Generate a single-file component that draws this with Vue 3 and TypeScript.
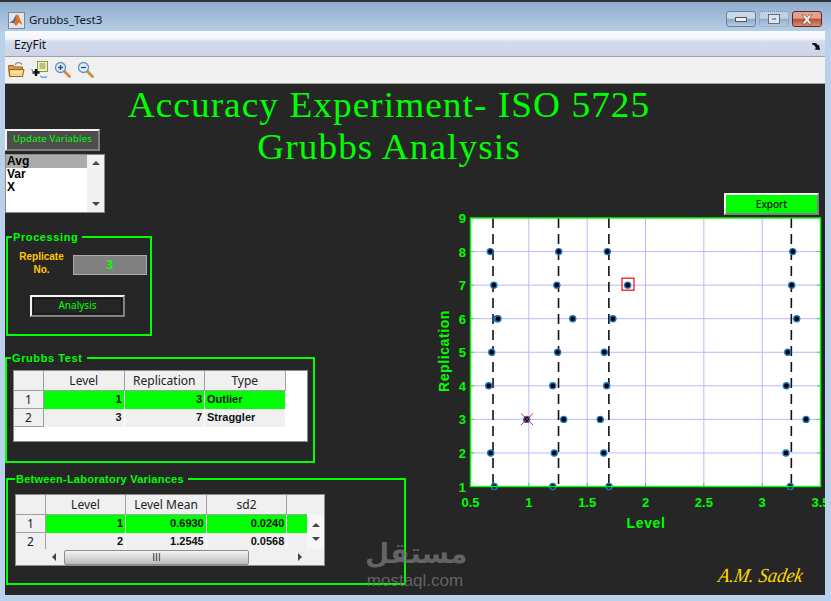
<script setup lang="ts">
type Row = { head: string; cells: string[] }

const vars = ["Avg", "Var", "X"]

const grubbsCols = ["Level", "Replication", "Type"]
const grubbsRows: Row[] = [
  { head: "1", cells: ["1", "3", "Outlier"] },
  { head: "2", cells: ["3", "7", "Straggler"] },
]

const labCols = ["Level", "Level Mean", "sd2", ""]
const labRows: Row[] = [
  { head: "1", cells: ["1", "0.6930", "0.0240", ""] },
  { head: "2", cells: ["2", "1.2545", "0.0568", ""] },
]

// replicate values per row, top row first
const data: [number, number[]][] = [
  [8, [0.67, 1.256, 1.673, 3.262]],
  [7, [0.7, 1.24, 1.847, 3.253]],
  [6, [0.727, 0.736, 1.376, 1.721, 3.296]],
  [5, [0.682, 1.247, 1.647, 3.219]],
  [4, [0.656, 1.205, 1.667, 3.207]],
  [3, [0.982, 1.299, 1.612, 3.376]],
  [2, [0.673, 1.218, 1.642, 3.204]],
  [1, [0.704, 1.205, 1.687, 3.241]],
]
const means = [0.693, 1.2545, 1.686, 3.25]
const xTicks = [0.5, 1, 1.5, 2, 2.5, 3, 3.5]
const yTicks = [1, 2, 3, 4, 5, 6, 7, 8, 9]

const sx = (v: number) => 470.5 + (v - 0.5) * 116.67
const sy = (v: number) => 486.5 - (v - 1) * 33.56

const points = data.flatMap(([r, xs]) => xs.map((x) => ({ x: sx(x), y: sy(r) })))
</script>

<template>
  <div class="window">
    <div class="titlebar">
      <svg class="app-icon" width="17" height="17" viewBox="0 0 17 17">
        <rect x="0.5" y="0.5" width="16" height="16" fill="#dfe6ef" stroke="#7d8794" />
        <path d="M1.5 11 5 8.5 8 3 10 2.5 14.5 13 11 10.5 8 14 5.5 11Z" fill="#e0701c" />
        <path d="M1.5 11 5 8.5 8 3 7 9 5.5 11Z" fill="#2d6fb5" />
      </svg>
      <span class="app-name">Grubbs_Test3</span>
      <div class="controls">
        <div class="ctrl"><span class="glyph-min"></span></div>
        <div class="ctrl ctrl-off"><span class="glyph-max"></span></div>
        <div class="ctrl ctrl-close">
          <svg width="14" height="11" viewBox="0 0 14 11">
            <path d="M2 1h3l2 2.4L9 1h3L8.8 5.5 12 10H9L7 7.6 5 10H2l3.2-4.5Z" fill="#f4f0ee" stroke="#6c3b34" stroke-width="0.6" />
          </svg>
        </div>
      </div>
    </div>

    <div class="client">
      <div class="menubar">
        <span>EzyFit</span>
        <svg width="8" height="7" viewBox="0 0 8 7">
          <path d="M0 0 4 0 6 2.500 7 1.500 8 7 2.500 6.500 4 5 2 2 0.500 2Z" fill="#111" />
        </svg>
      </div>

      <div class="toolbar">
        <svg width="17" height="17" viewBox="0 0 17 17">
          <path d="M7 4C8 1.500 12 0.500 14 3.500" fill="none" stroke="#7f95a8" stroke-width="1.200" />
          <path d="M0.500 4.500h5l1.500 1.500h7.500v9.500H1.500Z" fill="#dd9a30" stroke="#9c6326" />
          <path d="M1 8.500h15L14.500 15.500H2Z" fill="#f8d685" stroke="#9c6326" />
          <path d="M3 11h11" stroke="#fff2c4" />
        </svg>
        <svg width="17" height="17" viewBox="0 0 17 17">
          <rect x="6.500" y="0.500" width="10" height="10" fill="#f6f3b4" stroke="#7c9a5a" />
          <path d="M8.500 3h6M8.500 5h6M8.500 7h6" stroke="#7c8a5a" />
          <path d="M5 8v7M1.500 11.500h7" stroke="#111" stroke-width="2.400" />
          <path d="M0.500 8 3 12M9 15c2 2 4 1 7 1" fill="none" stroke="#3377bb" />
        </svg>
        <svg width="17" height="17" viewBox="0 0 17 17">
          <path d="M10 10l5.500 5.500" stroke="#c8903c" stroke-width="2.800" stroke-linecap="round" />
          <circle cx="6.500" cy="6.500" r="5" fill="#dcecf8" stroke="#6c93b5" stroke-width="1.300" />
          <path d="M4 6.500h5M6.500 4v5" stroke="#24508c" stroke-width="1.300" />
        </svg>
        <svg width="17" height="17" viewBox="0 0 17 17">
          <path d="M10 10l5.500 5.500" stroke="#c8903c" stroke-width="2.800" stroke-linecap="round" />
          <circle cx="6.500" cy="6.500" r="5" fill="#dcecf8" stroke="#6c93b5" stroke-width="1.300" />
          <path d="M4 6.500h5" stroke="#24508c" stroke-width="1.300" />
        </svg>
      </div>

      <div class="canvas">
        <div class="heading">
          <div>Accuracy Experiment- ISO 5725</div>
          <div>Grubbs Analysis</div>
        </div>

        <div class="left">
          <button class="btn update">Update Variables</button>

          <div class="listbox">
            <div class="list-items">
              <div v-for="(v, i) in vars" :key="v" class="list-item" :class="{ selected: i === 0 }">{{ v }}</div>
            </div>
            <div class="vscroll list-scroll">
              <span class="arrow-up"></span>
              <span class="arrow-down"></span>
            </div>
          </div>

          <fieldset class="panel processing">
            <legend>Processing</legend>
            <div class="replicate">
              <div class="replicate-label">Replicate<br />No.</div>
              <div class="replicate-value">3</div>
            </div>
            <button class="btn analysis"><span>Analysis</span></button>
          </fieldset>

          <fieldset class="panel grubbs">
            <legend>Grubbs Test</legend>
            <div class="tbox">
              <table class="grubbs-table">
                <thead>
                  <tr>
                    <th class="corner"></th>
                    <th v-for="c in grubbsCols" :key="c">{{ c }}</th>
                  </tr>
                </thead>
                <tbody>
                  <tr v-for="(r, i) in grubbsRows" :key="r.head" :class="{ hit: i === 0 }">
                    <th class="rowhead">{{ r.head }}</th>
                    <td v-for="(c, j) in r.cells" :key="j" :class="{ txt: j === 2 }">{{ c }}</td>
                  </tr>
                </tbody>
              </table>
            </div>
          </fieldset>

          <fieldset class="panel between">
            <legend>Between-Laboratory Variances</legend>
            <div class="tbox lab-box">
              <div class="lab-top">
                <table class="lab-table">
                  <thead>
                    <tr>
                      <th class="corner"></th>
                      <th v-for="(c, i) in labCols" :key="i" :class="{ narrow: i === 3 }">{{ c }}</th>
                    </tr>
                  </thead>
                  <tbody>
                    <tr v-for="(r, i) in labRows" :key="r.head" :class="{ hit: i === 0 }">
                      <th class="rowhead">{{ r.head }}</th>
                      <td v-for="(c, j) in r.cells" :key="j">{{ c }}</td>
                    </tr>
                  </tbody>
                </table>
                <div class="vscroll lab-scroll">
                  <span class="arrow-up"></span>
                  <span class="arrow-down"></span>
                </div>
              </div>
              <div class="hscroll">
                <span class="arrow-left"></span>
                <div class="thumb">III</div>
                <span class="arrow-right"></span>
              </div>
            </div>
          </fieldset>
        </div>

        <div class="right">
          <button class="btn export">Export</button>
          <svg class="plot" width="395" height="335" viewBox="430 210 395 335">
            <rect x="470.500" y="218" width="350" height="268.500" fill="#fff" />
            <g stroke="#b8b8ff" stroke-width="1">
              <line v-for="t in xTicks.slice(1, -1)" :key="t" :x1="sx(t)" :x2="sx(t)" y1="218" y2="486.500" />
              <line v-for="t in yTicks.slice(1, -1)" :key="t" x1="470.500" x2="820.500" :y1="sy(t)" :y2="sy(t)" />
            </g>
            <line v-for="m in means" :key="m" :x1="sx(m)" :x2="sx(m)" y1="218" y2="486.500"
              stroke="#111" stroke-width="1.600" stroke-dasharray="10 6" />
            <g fill="#000" stroke="#1a78c2" stroke-width="1.400">
              <circle v-for="(p, i) in points" :key="i" :cx="p.x" :cy="p.y" r="3" />
            </g>
            <rect x="622" y="278.200" width="12" height="12" fill="none" stroke="#f00" stroke-width="1.200" />
            <path d="M521 413.500 533 425M533 413.500 521 425" stroke="#e8202a" stroke-width="1" />
            <g stroke="#0f0" stroke-width="1">
              <line v-for="t in xTicks" :key="t" :x1="sx(t)" :x2="sx(t)" y1="486.500" y2="483" />
              <line v-for="t in yTicks" :key="t" x1="470.500" x2="474" :y1="sy(t)" :y2="sy(t)" />
              <line v-for="t in yTicks" :key="t" x1="820.500" x2="817" :y1="sy(t)" :y2="sy(t)" />
            </g>
            <rect x="470.500" y="218" width="350" height="268.500" fill="none" stroke="#0f0" stroke-width="1.400" />
            <g class="tick-labels">
              <text v-for="t in xTicks" :key="t" :x="sx(t)" y="507" text-anchor="middle">{{ t }}</text>
              <text v-for="t in yTicks" :key="t" x="466" :y="sy(t) + 5" text-anchor="end">{{ t }}</text>
            </g>
            <text class="axis-label" x="646" y="528" text-anchor="middle">Level</text>
            <text class="axis-label" transform="translate(449 351) rotate(-90)" text-anchor="middle">Replication</text>
          </svg>
          <div class="signature">A.M. Sadek</div>
        </div>

        <div class="watermark">
          <div class="wm-ar">مستقل</div>
          <div class="wm-en">mostaql.com</div>
        </div>
      </div>
    </div>
  </div>
</template>

<style>
html,
body {
  margin: 0;
  background: #b9d1ea;
}
</style>

<style scoped>
.window {
  width: 831px;
  height: 601px;
  box-sizing: border-box;
  overflow: hidden;
  border-top: 2px solid #333;
  background: linear-gradient(#8fadcc 0, #b9d1ea 32px);
  font-family: "Liberation Sans", Arial, sans-serif;
}

.titlebar {
  display: flex;
  align-items: center;
  height: 29px;
  padding: 0 9px 0 8px;
}

.app-icon {
  margin-top: 8px;
}

.app-name {
  margin: 6px 0 0 4px;
  font: 11.5px "Noto Sans", sans-serif;
  color: #101828;
}

.controls {
  display: flex;
  gap: 3px;
  margin: 0 0 0 auto;
  align-self: flex-start;
  padding-top: 9px;
}

.ctrl {
  display: flex;
  align-items: center;
  justify-content: center;
  box-sizing: border-box;
  width: 30px;
  height: 16px;
  border: 1px solid #6b819b;
  border-radius: 3px;
  background: linear-gradient(#c9d9ea 0 45%, #8ba7c4 50%, #b7cce0 100%);
}

.ctrl-off {
  opacity: 0.75;
  border-style: dotted;
}

.ctrl-close {
  border-color: #6c2530;
  background: linear-gradient(#e3a08e 0 45%, #b5512f 50%, #d98d78 100%);
}

.glyph-min {
  width: 10px;
  height: 3px;
  background: #eef0f2;
  border: 1px solid #556;
}

.glyph-max {
  width: 4px;
  height: 2px;
  border: 3px solid #eef0f2;
  outline: 1px solid #556;
  background: #7f90a4;
}

.client {
  margin: 0 6px 0 5px;
}

.menubar {
  display: flex;
  align-items: flex-start;
  justify-content: space-between;
  box-sizing: border-box;
  height: 26px;
  padding: 5px 5px 0 9px;
  font: 12px "Noto Sans", sans-serif;
  color: #111;
  background: linear-gradient(#fafcff 0, #f2f5fb 8px, #d6dcee 10px, #ccd3e7 100%);
  border-bottom: 1px solid #a3a3a3;
}

.menubar svg {
  margin-top: 7px;
}

.toolbar {
  display: flex;
  gap: 6px;
  align-items: center;
  box-sizing: border-box;
  height: 27px;
  padding: 0 0 2px 3px;
  background: #f0f0f0;
  border-bottom: 1px solid #a0a0a0;
}

.canvas {
  display: grid;
  grid-template-columns: 425px 395px;
  position: relative;
  height: 511px;
  background: #262626;
  overflow: hidden;
}

.heading {
  grid-column: 1 / 3;
  grid-row: 1;
  width: 768px;
  padding-top: 1px;
  text-align: center;
  font: 35px/42px "Liberation Serif", serif;
  letter-spacing: 1px;
  transform: scaleX(1.065);
  color: #0f0;
}

.left {
  grid-column: 1;
  grid-row: 1;
  display: flex;
  flex-direction: column;
  align-items: flex-start;
  padding-top: 45px;
  z-index: 1;
}

.right {
  grid-column: 2;
  grid-row: 1;
  display: flex;
  flex-direction: column;
  align-items: flex-end;
  padding-top: 109px;
  z-index: 1;
}

.btn {
  padding: 0;
  box-sizing: border-box;
  width: 95px;
  height: 22px;
  border: 2px solid;
  border-color: #f4f4f4 #808080 #808080 #f4f4f4;
  font: 10px "Noto Sans", sans-serif;
  color: #0f0;
}

.update {
  padding-bottom: 3px;
  background: #4d4d4d;
  font-size: 9.5px;
  letter-spacing: 0.2px;
}

.listbox {
  display: flex;
  box-sizing: border-box;
  width: 100px;
  height: 59px;
  margin-top: 3px;
  border: 1px solid #8b8b8b;
  background: #fff;
}

.list-items {
  flex: 1;
}

.list-item {
  height: 13px;
  padding-left: 1px;
  font: bold 12px/13px "Liberation Sans", sans-serif;
  color: #000;
}

.selected {
  background: #ababab;
}

.vscroll {
  display: flex;
  flex-direction: column;
  justify-content: space-between;
  align-items: center;
  box-sizing: border-box;
  width: 17px;
  padding: 6px 0;
  background: #f1f1f1;
}

.arrow-up,
.arrow-down,
.arrow-left,
.arrow-right {
  width: 0;
  height: 0;
  border: 4px solid transparent;
}

.arrow-up {
  border-top-width: 0;
  border-bottom-color: #444;
}

.arrow-down {
  border-bottom-width: 0;
  border-top-color: #444;
}

.arrow-left {
  border-left-width: 0;
  border-right-color: #444;
}

.arrow-right {
  border-right-width: 0;
  border-left-color: #444;
}

.panel {
  box-sizing: border-box;
  margin: 0;
  padding: 0;
  min-width: 0;
  border: 2px solid #0f0;
}

.panel legend {
  padding: 0 4px 0 1px;
  margin-left: 1px;
  font: bold 11px/14px "Liberation Sans", sans-serif;
  letter-spacing: 0.6px;
  color: #0f0;
}

.processing {
  width: 146px;
  height: 106px;
  margin: 17px 0 0 1px;
}

.processing legend {
  margin-left: 4px;
  letter-spacing: 0.6px;
}

.replicate {
  display: flex;
  align-items: flex-start;
  padding: 6px 0 0 2px;
}

.replicate-label {
  width: 63px;
  text-align: center;
  font: bold 10px/13px "Liberation Sans", sans-serif;
  color: #ffc800;
}

.replicate-value {
  box-sizing: border-box;
  width: 74px;
  height: 20px;
  margin-top: 5px;
  border: 1px solid #aaa;
  background: #808080;
  text-align: center;
  font: bold 12px/18px "Noto Sans", sans-serif;
  color: #0f0;
}

.analysis {
  display: block;
  margin: 19px 0 0 22px;
  padding: 1px;
  background: #262626;
}

.analysis span {
  display: block;
  height: 100%;
  box-sizing: border-box;
  border: 1px dotted #000;
  line-height: 13px;
}

.grubbs {
  width: 310px;
  height: 112px;
  margin-top: 15px;
  padding: 5px 0 0 6px;
}

.grubbs legend {
  margin-left: -2px;
}

.tbox {
  box-sizing: border-box;
  border: 1px solid #8c8c8c;
  background: #fff;
}

.grubbs .tbox {
  width: 295px;
  height: 72px;
}

table {
  border-collapse: separate;
  border-spacing: 0;
  table-layout: fixed;
}

th {
  padding: 0;
  box-sizing: border-box;
  height: 20px;
  background: #f0f0f0;
  border-right: 1px solid #a0a0a0;
  border-bottom: 1px solid #a0a0a0;
  font: 12px "Noto Sans", sans-serif;
  color: #222;
  text-align: center;
}

tbody th {
  height: 18px;
}

td {
  padding: 0 2px 2px 0;
  box-sizing: border-box;
  height: 18px;
  background: #f0f0f0;
  border-right: 1px solid #fff;
  font: bold 11px/14px "Liberation Sans", sans-serif;
  color: #111;
  text-align: right;
}

td.txt {
  padding: 0 0 2px 2px;
  text-align: left;
}

.hit td {
  background: #0f0;
}

.corner,
.rowhead {
  width: 30px;
}

.grubbs-table th:not(.corner):not(.rowhead) {
  width: 80.5px;
}

.between {
  width: 400px;
  height: 113px;
  margin: 9px 0 0 1px;
  padding: 8px 0 0 7px;
}

.between legend {
  margin-left: 0;
  letter-spacing: 0.25px;
}

.lab-box {
  width: 310px;
  height: 72px;
  background: #f0f0f0;
}

.lab-top {
  display: flex;
  height: 54px;
  overflow: hidden;
}

.lab-table th:not(.corner):not(.rowhead) {
  width: 81px;
}

.lab-table th.narrow:not(.corner) {
  width: 20px;
  border-right: 0;
}

.lab-table td:last-child {
  border-right: 0;
}

.lab-table tbody tr:last-child th,
.lab-table tbody tr:last-child td {
  height: 16px;
  border-bottom: 0;
}

.lab-scroll {
  width: 17px;
  height: 34px;
  margin-top: 20px;
  padding: 8px 0;
  background: #f7f7f7;
}

.hscroll {
  display: flex;
  align-items: center;
  box-sizing: border-box;
  width: 261px;
  height: 16px;
  margin-left: 30px;
  padding: 0 5px 0 6px;
  background: #f0f0f0;
}

.thumb {
  box-sizing: border-box;
  width: 185px;
  height: 15px;
  margin-left: 8px;
  margin-right: auto;
  border: 1px solid #8c8c8c;
  border-radius: 2px;
  background: linear-gradient(#f4f4f4, #d8d8d8 50%, #bcbcbc);
  text-align: center;
  font: 10px/13px "Liberation Sans", sans-serif;
  color: #333;
}

.export {
  margin-right: 6px;
  background: #0f0;
  color: #111;
  font-weight: 500;
}

.plot {
  display: block;
  margin-top: -5px;
}

.tick-labels text {
  font: bold 13px "Liberation Sans", sans-serif;
  fill: #0f0;
}

.axis-label {
  font: bold 14px "Liberation Sans", sans-serif;
  letter-spacing: 0.6px;
  fill: #0f0;
}

.signature {
  margin: 18px 18px 0 0;
  font: italic 20px/24px "Liberation Serif", serif;
  color: #ffd800;
  transform: skewX(-10deg) scaleX(0.92);
}

/* site watermark stamped over the screenshot */
.watermark {
  position: absolute;
  left: 360px;
  top: 452px;
  width: 100px;
  text-align: center;
  color: rgba(120, 120, 120, 0.75);
  z-index: 2;
  pointer-events: none;
}

.wm-ar {
  font: bold 28px/36px "DejaVu Sans", sans-serif;
}

.wm-en {
  font: 17px/17px "Liberation Sans", sans-serif;
}
</style>
